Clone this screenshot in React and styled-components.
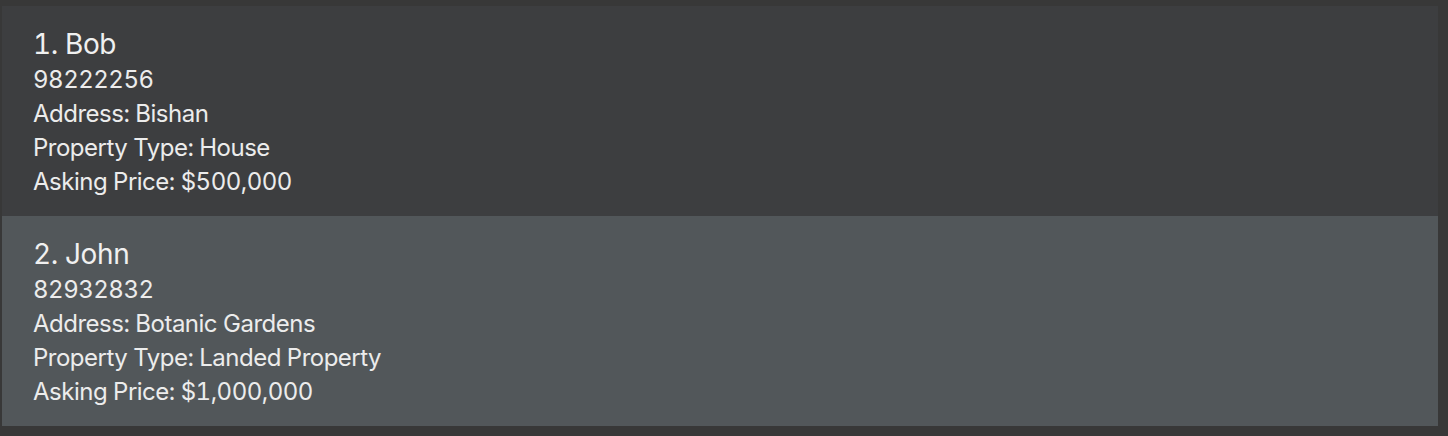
import React from 'react';
import styled, { createGlobalStyle } from 'styled-components';

const GlobalStyle = createGlobalStyle`
  html, body {
    margin: 0;
    padding: 0;
    background: #383838;
  }
`;

const Page = styled.div`
  width: 1448px;
  height: 436px;
  box-sizing: border-box;
  padding: 6px 10px 10px 2px;
  background: #383838;
  font-family: Inter, "Noto Sans", sans-serif;
  font-variant-numeric: tabular-nums;
`;

const List = styled.div`
  display: flex;
  flex-direction: column;
`;

const Card = styled.div`
  height: 210px;
  box-sizing: border-box;
  padding: 21px 31px 0;
  background: ${(p) => (p.alt ? '#52575a' : '#3d3e40')};
  display: flex;
  flex-direction: column;
`;

const Name = styled.div`
  font-size: 28px;
  line-height: 34px;
  margin-bottom: 2px;
  letter-spacing: -0.4px;
  color: #f0f0f0;
`;

const Line = styled.div`
  font-size: 24px;
  line-height: 34px;
  letter-spacing: -0.5px;
  color: #ececec;
`;

const clients = [
  { name: 'Bob', phone: '98222256', address: 'Bishan', type: 'House', price: '$500,000' },
  { name: 'John', phone: '82932832', address: 'Botanic Gardens', type: 'Landed Property', price: '$1,000,000' },
];

export default function App() {
  return (
    <>
      <GlobalStyle />
      <Page>
        <List>
          {clients.map((c, i) => (
            <Card key={c.name} alt={i % 2 === 1}>
              <Name>{i + 1}. {c.name}</Name>
              <Line>{c.phone}</Line>
              <Line>Address: {c.address}</Line>
              <Line>Property Type: {c.type}</Line>
              <Line>Asking Price: {c.price}</Line>
            </Card>
          ))}
        </List>
      </Page>
    </>
  );
}
